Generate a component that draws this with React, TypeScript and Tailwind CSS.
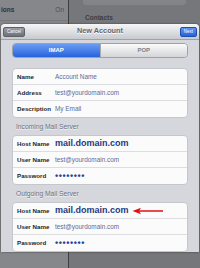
import React from 'react'

const font = { fontFamily: '"Liberation Sans", Arial, sans-serif' }

type Row = { label: string; value: string; kind?: 'host' | 'dots' | 'text'; arrow?: boolean }

function Field({ row, last }: { row: Row; last: boolean }) {
  return (
    <div className={`relative flex h-[16px] items-center pl-[4px] ${last ? '' : 'border-b border-[#dcdde0]'}`}>
      <div className="w-[38px] shrink-0 text-[6.2px] font-bold text-[#1e1e1e]">{row.label}</div>
      {row.kind === 'host' ? (
        <div className="text-[9px] font-bold text-[#1d3a82] leading-none">{row.value}</div>
      ) : row.kind === 'dots' ? (
        <div className="text-[9px] font-bold tracking-[0.6px] text-[#25449a] leading-none">••••••••</div>
      ) : (
        <div className="text-[6.4px] text-[#5a6c98]">{row.value}</div>
      )}
      {row.arrow && (
        <svg className="absolute left-[119px] top-[4px]" width="32" height="8" viewBox="0 0 32 8">
          <path d="M31 4 L3 4" stroke="#e01010" strokeWidth="1.6" />
          <path d="M0.5 4 L9 0.8 L7 4 L9 7.2 Z" fill="#e01010" />
        </svg>
      )}
    </div>
  )
}

function Card({ rows }: { rows: Row[] }) {
  return (
    <div className="rounded-[4px] border border-[#c4c7cc] bg-[#fbfbfb]">
      {rows.map((r, i) => (
        <Field key={i} row={r} last={i === rows.length - 1} />
      ))}
    </div>
  )
}

function SectionLabel({ children }: { children: React.ReactNode }) {
  return (
    <div className="flex h-[17px] items-center pl-[4px] pt-[1px] text-[6.7px] font-medium text-[#6b7180] [text-shadow:0_1px_0_#f4f5f7]">
      {children}
    </div>
  )
}

export default function App() {
  return (
    <div style={font} className="relative h-[268px] w-[200px] overflow-hidden bg-[#5a5b5f]">
      {/* background (dimmed settings screen) */}
      <div className="flex h-full">
        <div className="w-[69px] border-r border-[#3d3e41] bg-[#86878a]">
          <div className="flex h-[20px] items-center justify-between px-[1px] pr-[4px]">
            <span className="text-[6.5px] font-bold text-[#2f3033]">ions</span>
            <span className="text-[6.5px] text-[#4b4d52]">On</span>
          </div>
          <div className="h-[1px] bg-[#77787b]" />
        </div>
        <div className="flex-1 bg-[#76777a]">
          <div className="mx-[14px] h-[5px] rounded-b-[3px] bg-[#838487]" />
          <div className="pl-[16px] pt-[8px] text-[6.5px] font-bold text-[#3a3d47]">Contacts</div>
        </div>
      </div>

      {/* modal */}
      <div className="absolute left-[1px] top-[24px] h-[228px] w-[198px] overflow-hidden rounded-t-[4px] bg-[#d5d7dc] shadow-[0_0_2px_rgba(0,0,0,0.6)]">
        <div className="relative flex h-[16px] items-center justify-center border-b border-[#9ea2a9] bg-gradient-to-b from-[#f6f6f7] to-[#c7cace]">
          <div className="absolute left-[2px] top-[3px] flex h-[10px] w-[22px] items-center justify-center rounded-[2px] border border-[#5e6167] bg-gradient-to-b from-[#9a9da3] to-[#6d7077] text-[4.5px] text-white">
            Cancel
          </div>
          <span className="text-[7.3px] font-bold text-[#62666e] [text-shadow:0_1px_0_#ffffff]">New Account</span>
          <div className="absolute right-[2px] top-[3px] flex h-[10px] w-[17px] items-center justify-center rounded-[2px] border border-[#1c4fb0] bg-gradient-to-b from-[#5f93f0] to-[#2462d8] text-[4.5px] text-white">
            Next
          </div>
        </div>

        <div className="px-[11px] pt-[3px]">
          <div className="flex h-[15px] overflow-hidden rounded-[4px] border border-[#9da1a8]">
            <div className="flex flex-1 items-center justify-center bg-gradient-to-b from-[#6a9cf3] to-[#2663dc] text-[6px] font-bold text-white">
              IMAP
            </div>
            <div className="flex flex-1 items-center justify-center border-l border-[#a6a9ae] bg-gradient-to-b from-[#fbfbfb] to-[#d3d5d8] text-[6px] font-bold text-[#7d8087]">
              POP
            </div>
          </div>

          <div className="mt-[10px]">
            <Card
              rows={[
                { label: 'Name', value: 'Account Name' },
                { label: 'Address', value: 'test@yourdomain.com' },
                { label: 'Description', value: 'My Email' },
              ]}
            />
          </div>

          <SectionLabel>Incoming Mail Server</SectionLabel>
          <Card
            rows={[
              { label: 'Host Name', value: 'mail.domain.com', kind: 'host' },
              { label: 'User Name', value: 'test@yourdomain.com' },
              { label: 'Password', value: '', kind: 'dots' },
            ]}
          />

          <SectionLabel>Outgoing Mail Server</SectionLabel>
          <Card
            rows={[
              { label: 'Host Name', value: 'mail.domain.com', kind: 'host', arrow: true },
              { label: 'User Name', value: 'test@yourdomain.com' },
              { label: 'Password', value: '', kind: 'dots' },
            ]}
          />
        </div>
      </div>
    </div>
  )
}
